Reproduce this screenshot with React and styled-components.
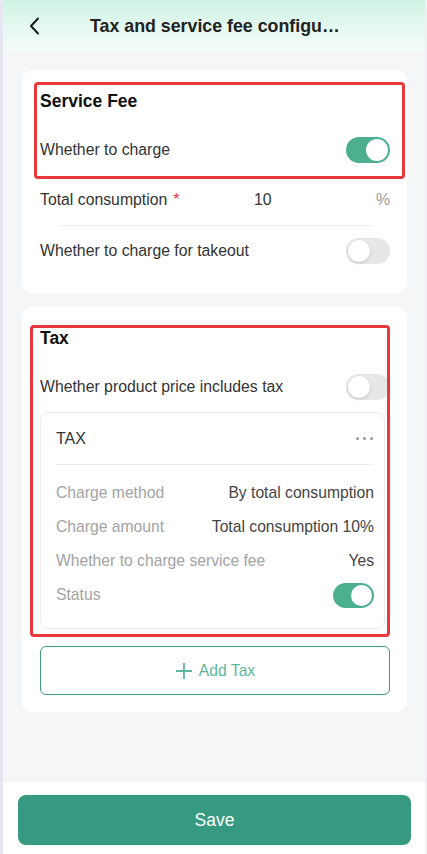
import React from "react";
import styled, { createGlobalStyle } from "styled-components";

const GlobalStyle = createGlobalStyle`
  html, body { margin: 0; padding: 0; }
  body {
    font-family: "Liberation Sans", Arial, sans-serif;
    background: #fff;
    -webkit-font-smoothing: antialiased;
  }
  * { box-sizing: border-box; }
`;

const Page = styled.div`
  width: 100%;
  height: 100vh;
  display: flex;
  flex-direction: column;
  border-left: 3px solid #e6e6f3;
  border-right: 2px solid #f1f1f5;
  background: #f5f6f8;
  overflow: hidden;
`;

const Header = styled.header`
  height: 51px;
  flex: none;
  display: flex;
  align-items: center;
  padding-left: 25px;
  background: linear-gradient(180deg, #cdf3e3 0%, #e6f8f1 55%, #f4fbf8 100%);
`;

const BackIcon = styled.svg`
  width: 12px;
  height: 18px;
  flex: none;
`;

const Title = styled.h1`
  margin: 0 0 0 50px;
  font-size: 17.8px;
  font-weight: 700;
  color: #222;
  white-space: nowrap;
  line-height: 22px;
`;

const Content = styled.main`
  flex: 1;
  display: flex;
  flex-direction: column;
  gap: 14px;
  padding: 19px 18px 0 19px;
  overflow: hidden;
`;

const Card = styled.section`
  background: #fff;
  border-radius: 10px;
  padding: 14px 17px 17px 18px;
  display: flex;
  flex-direction: column;
`;

const Group = styled.div`
  position: relative;
  display: flex;
  flex-direction: column;
  &::after {
    content: "";
    position: absolute;
    top: ${(p) => p.$top}px;
    right: ${(p) => p.$right}px;
    bottom: ${(p) => p.$bottom}px;
    left: ${(p) => p.$left}px;
    border: 3px solid #e8383d;
    border-radius: 4px;
    pointer-events: none;
  }
`;

const SectionTitle = styled.h2`
  margin: 0;
  padding: 6px 0 13px;
  font-size: 17.5px;
  line-height: 22px;
  font-weight: 700;
  color: #111;
`;

const Row = styled.div`
  height: 50px;
  display: flex;
  align-items: center;
  font-size: 15.8px;
  color: #333;
`;

const RowLabel = styled.span`
  flex: ${(p) => (p.$fixed ? "none" : "1")};
  width: ${(p) => (p.$fixed ? `${p.$fixed}px` : "auto")};
`;

const Required = styled.span`
  color: #e8383d;
  margin-left: 6px;
`;

const InputValue = styled.span`
  flex: 1;
  color: #333;
`;

const Unit = styled.span`
  color: #999;
`;

const Divider = styled.div`
  height: 1px;
  background: #eeeeee;
  margin: 0 18px 0 20px;
`;

const Track = styled.span`
  flex: none;
  width: ${(p) => p.$w}px;
  height: ${(p) => p.$h}px;
  border-radius: ${(p) => p.$h / 2}px;
  padding: 2px;
  display: flex;
  align-items: center;
  justify-content: ${(p) => (p.$on ? "flex-end" : "flex-start")};
  background: ${(p) => (p.$on ? "#4caf8e" : "#e7e7e7")};
`;

const Knob = styled.span`
  width: ${(p) => p.$d}px;
  height: ${(p) => p.$d}px;
  border-radius: 50%;
  background: #fff;
  box-shadow: ${(p) => (p.$on ? "none" : "0 1px 3px rgba(0,0,0,0.18)")};
`;

const Toggle = ({ on, w = 44, h = 26 }) => (
  <Track $on={on} $w={w} $h={h}>
    <Knob $on={on} $d={h - 4} />
  </Track>
);

const TaxCard = styled.div`
  border: 1px solid #ececec;
  border-radius: 8px;
  margin-right: 5px;
  display: flex;
  flex-direction: column;
`;

const TaxHeader = styled.div`
  height: 52px;
  margin: 0 10px 0 15px;
  display: flex;
  align-items: center;
  justify-content: space-between;
  border-bottom: 1px solid #eeeeee;
  font-size: 16px;
  color: #333;
`;

const Dots = styled.span`
  display: flex;
  gap: 4px;
  margin-right: 1px;
`;

const Dot = styled.span`
  width: 3px;
  height: 3px;
  border-radius: 50%;
  background: #9a9a9a;
`;

const TaxBody = styled.div`
  padding: 11px 10px 16px 15px;
  display: flex;
  flex-direction: column;
`;

const InfoRow = styled.div`
  height: 34px;
  display: flex;
  align-items: center;
  justify-content: space-between;
  font-size: 15.7px;
`;

const InfoLabel = styled.span`
  color: #a3a3a3;
`;

const InfoValue = styled.span`
  color: #444;
`;

const AddButton = styled.button`
  margin-top: 17px;
  height: 49px;
  width: 100%;
  border: 1px solid #3f9a80;
  border-radius: 6px;
  background: #fff;
  display: flex;
  align-items: center;
  justify-content: center;
  gap: 6px;
  font-family: inherit;
  font-size: 15.7px;
  color: #5cb89c;
  padding: 0;
`;

const Footer = styled.footer`
  flex: none;
  background: #fff;
  padding: 13px 14px 9px 15px;
`;

const SaveButton = styled.button`
  width: 100%;
  height: 50px;
  border: none;
  border-radius: 8px;
  background: #359a80;
  color: #fff;
  font-family: inherit;
  font-size: 17.5px;
  padding: 0;
`;

export default function App() {
  return (
    <>
      <GlobalStyle />
      <Page>
        <Header>
          <BackIcon viewBox="0 0 12 18">
            <path d="M10 1.5 L3 9 L10 16.5" fill="none" stroke="#1a1a1a" strokeWidth="2" strokeLinecap="round" strokeLinejoin="round" />
          </BackIcon>
          <Title>Tax and service fee configu…</Title>
        </Header>
        <Content>
          <Card>
            <Group $top={-2} $right={-15} $bottom={-4} $left={-6}>
              <SectionTitle>Service Fee</SectionTitle>
              <Row>
                <RowLabel>Whether to charge</RowLabel>
                <Toggle on />
              </Row>
            </Group>
            <Row>
              <RowLabel $fixed={214}>
                Total consumption<Required>*</Required>
              </RowLabel>
              <InputValue>10</InputValue>
              <Unit>%</Unit>
            </Row>
            <Divider />
            <Row>
              <RowLabel>Whether to charge for takeout</RowLabel>
              <Toggle on={false} />
            </Row>
          </Card>
          <Card>
            <Group $top={4} $right={0} $bottom={-8} $left={-10}>
              <SectionTitle>Tax</SectionTitle>
              <Row>
                <RowLabel>Whether product price includes tax</RowLabel>
                <Toggle on={false} />
              </Row>
              <TaxCard>
                <TaxHeader>
                  <span>TAX</span>
                  <Dots>
                    <Dot />
                    <Dot />
                    <Dot />
                  </Dots>
                </TaxHeader>
                <TaxBody>
                  <InfoRow>
                    <InfoLabel>Charge method</InfoLabel>
                    <InfoValue>By total consumption</InfoValue>
                  </InfoRow>
                  <InfoRow>
                    <InfoLabel>Charge amount</InfoLabel>
                    <InfoValue>Total consumption 10%</InfoValue>
                  </InfoRow>
                  <InfoRow>
                    <InfoLabel>Whether to charge service fee</InfoLabel>
                    <InfoValue>Yes</InfoValue>
                  </InfoRow>
                  <InfoRow>
                    <InfoLabel>Status</InfoLabel>
                    <Toggle on w={41} h={25} />
                  </InfoRow>
                </TaxBody>
              </TaxCard>
            </Group>
            <AddButton>
              <svg width="18" height="18" viewBox="0 0 18 18">
                <path d="M9 1 V17 M1 9 H17" stroke="#5cb89c" strokeWidth="1.8" fill="none" />
              </svg>
              Add Tax
            </AddButton>
          </Card>
        </Content>
        <Footer>
          <SaveButton>Save</SaveButton>
        </Footer>
      </Page>
    </>
  );
}
